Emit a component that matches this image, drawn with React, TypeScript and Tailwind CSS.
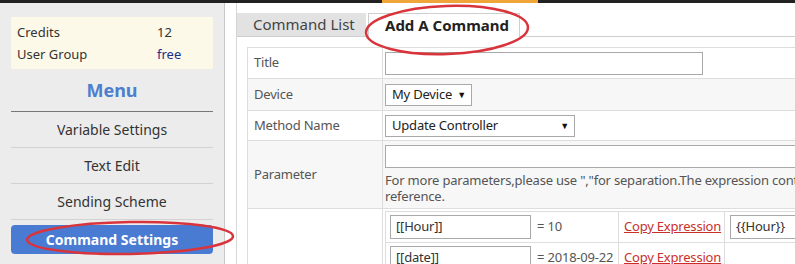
import React from 'react';

const menuItems = ['Variable Settings', 'Text Edit', 'Sending Scheme'];

function FakeSelect({ width, label }: { width: string; label: string }) {
  return (
    <div className={`${width} h-[22px] border border-[#a9a9a9] bg-white flex items-center justify-between pl-[6px] pr-[5px] text-[13px] text-[#222]`}>
      <span>{label}</span>
      <span className="text-[9px] leading-none text-[#111]">▼</span>
    </div>
  );
}

export default function App() {
  return (
    <div className="relative w-[795px] h-[264px] overflow-hidden bg-white font-['Noto_Sans',sans-serif]">
      {/* top bar */}
      <div className="flex h-[3px] bg-[#222]">
        <div className="w-[382px]" />
        <div className="w-[156px] bg-[#f0a53a]" />
      </div>

      <div className="flex">
        {/* sidebar */}
        <aside className="w-[225px] shrink-0 h-[261px] bg-[#ececec] border-r border-[#c8c8c8] px-[11px] pt-[14px]">
          <div className="bg-[#fdf9e9] px-[6px] py-[4px] text-[13px] text-[#333]">
            <div className="flex leading-[22px]">
              <span className="w-[140px]">Credits</span>
              <span>12</span>
            </div>
            <div className="flex leading-[22px]">
              <span className="w-[140px]">User Group</span>
              <span className="text-[#1a2f8a]">free</span>
            </div>
          </div>
          <div className="mt-[9px] mb-[9px] text-center text-[18px] leading-[24px] font-bold text-[#4d7fcf]">Menu</div>
          <div className="border-t border-[#777]" />
          {menuItems.map((item) => (
            <div key={item} className="h-[36px] flex items-center justify-center border-b border-[#d2d2d2] text-[14px] text-[#333]">
              {item}
            </div>
          ))}
          <div className="mt-[5px] h-[29px] rounded-[4px] bg-[#4a7bd3] flex items-center justify-center text-[14px] font-bold text-white">
            Command Settings
          </div>
        </aside>

        <div className="w-[11px] shrink-0" />

        {/* main */}
        <main className="flex-1 min-w-0 border-l border-[#d6d6d6] pt-[10px] overflow-hidden">
          <div className="flex h-[24px] border-b border-[#cfcfcf]">
            <div className="w-[129px] bg-[#e2e2e2] pl-[16px] flex items-center text-[15px] text-[#444]">Command List</div>
            <div className="ml-[2px] w-[152px] -mb-px bg-white border border-b-0 border-[#cfcfcf] pl-[16px] flex items-center text-[15px] font-bold text-[#222]">
              Add A Command
            </div>
          </div>

          <div className="pl-[10px] pt-[10px]">
            <table className="w-[700px] table-fixed border-collapse text-[13px] tracking-[-0.2px] text-[#555]">
              <colgroup>
                <col className="w-[135px]" />
                <col />
              </colgroup>
              <tbody>
                <tr className="h-[31px]">
                  <td className="border border-[#dddddd] pl-[6px]">Title</td>
                  <td className="border border-[#dddddd] pl-[2px]">
                    <div className="w-[318px] h-[23px] border border-[#a9a9a9]" />
                  </td>
                </tr>
                <tr className="h-[32px] bg-[#f7f7f7]">
                  <td className="border border-[#dddddd] pl-[6px]">Device</td>
                  <td className="border border-[#dddddd] pl-[2px]">
                    <FakeSelect width="w-[87px]" label="My Device" />
                  </td>
                </tr>
                <tr className="h-[30px]">
                  <td className="border border-[#dddddd] pl-[6px]">Method Name</td>
                  <td className="border border-[#dddddd] pl-[2px]">
                    <FakeSelect width="w-[190px]" label="Update Controller" />
                  </td>
                </tr>
                <tr className="h-[68px] bg-[#f7f7f7]">
                  <td className="border border-[#dddddd] pl-[6px]">Parameter</td>
                  <td className="border border-[#dddddd] pl-[2px] align-top pt-[4px]">
                    <div className="w-[500px] h-[23px] border border-[#a9a9a9] bg-white" />
                    <p className="mt-[4px] leading-[16px] whitespace-nowrap">
                      For more parameters,please use ","for separation.The expression content can be used for
                    </p>
                    <p className="leading-[16px]">reference.</p>
                  </td>
                </tr>
                <tr className="h-[70px]">
                  <td className="border border-[#dddddd]" />
                  <td className="border border-[#dddddd] pl-[2px] pt-[2px] align-top">
                    <table className="w-[460px] table-fixed border-collapse text-[13px] text-[#555]">
                      <colgroup>
                        <col className="w-[233px]" />
                        <col className="w-[106px]" />
                        <col />
                      </colgroup>
                      <tbody>
                        {[
                          ['[[Hour]]', '10', true],
                          ['[[date]]', '2018-09-22', false],
                        ].map(([tag, val, hasOut]) => (
                          <tr key={String(tag)} className="h-[31px]">
                            <td className="border border-[#dddddd] pl-[4px]">
                              <div className="flex items-center">
                                <div className="w-[141px] h-[24px] border border-[#a9a9a9] bg-white pl-[5px] flex items-center text-[#333]">{tag}</div>
                                <span className="ml-[6px] whitespace-nowrap">= {val}</span>
                              </div>
                            </td>
                            <td className="border border-[#dddddd] pl-[5px]">
                              <span className="text-[#c9302c] underline whitespace-nowrap">Copy Expression</span>
                            </td>
                            <td className="border border-[#dddddd] pl-[5px]">
                              {hasOut ? (
                                <div className="w-[110px] h-[24px] border border-[#a9a9a9] pl-[5px] flex items-center text-[#333]">{'{{Hour}}'}</div>
                              ) : null}
                            </td>
                          </tr>
                        ))}
                      </tbody>
                    </table>
                  </td>
                </tr>
              </tbody>
            </table>
          </div>
        </main>
      </div>

      {/* red annotation ellipses */}
      <svg className="absolute left-0 top-0 pointer-events-none" width="795" height="264">
        <ellipse cx="130" cy="238" rx="103" ry="16" fill="none" stroke="#d9343c" strokeWidth="2.5" transform="rotate(-1 130 238)" />
        <ellipse cx="447" cy="30" rx="81" ry="24" fill="none" stroke="#d9343c" strokeWidth="2.5" transform="rotate(-2 447 30)" />
      </svg>
    </div>
  );
}
